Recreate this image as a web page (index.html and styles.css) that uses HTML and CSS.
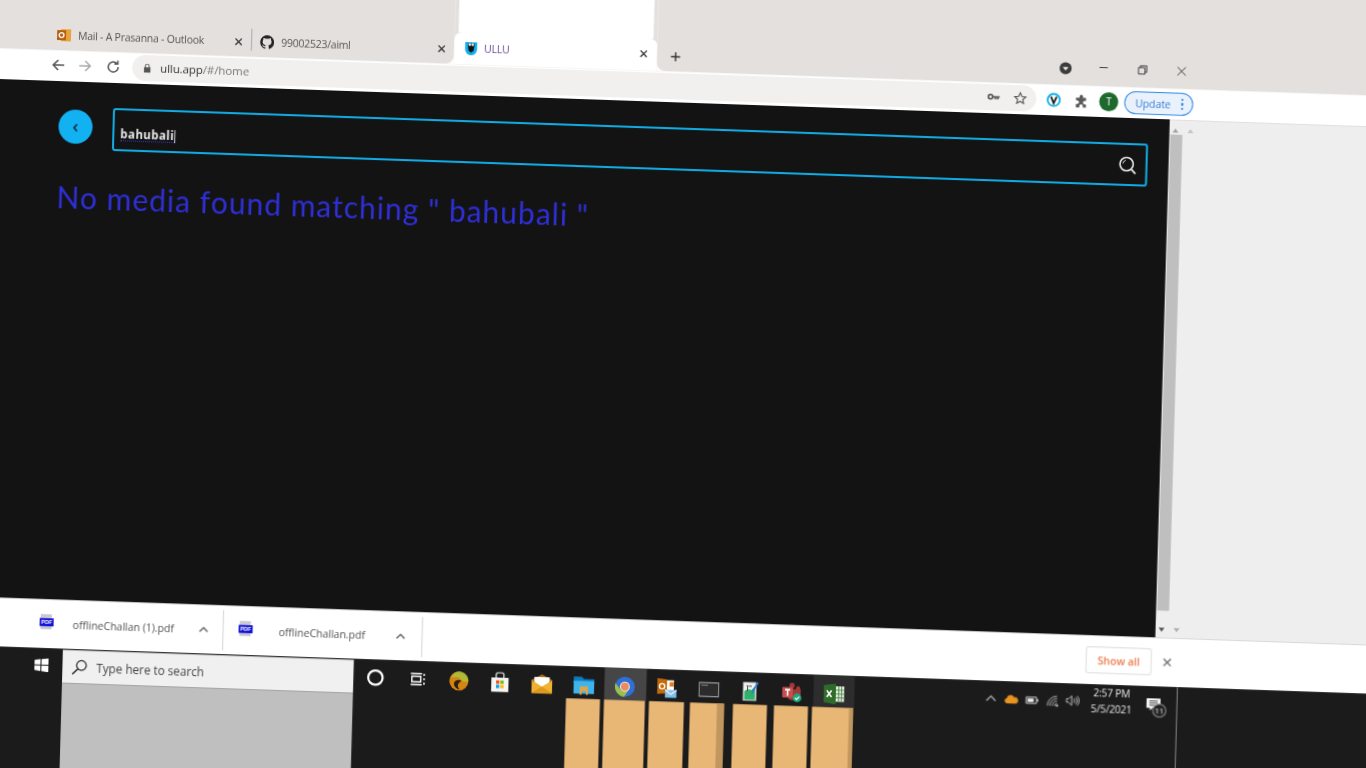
FILE: index.html
```html
<!DOCTYPE html>
<html lang="en">
<head>
<meta charset="utf-8">
<title>ULLU</title>
<link rel="stylesheet" href="styles.css">
</head>
<body>
<div class="stage">
  <header class="strip">
    <div class="strip-left">
      <div class="tab tab-one">
        <svg class="fav" viewBox="0 0 14 14"><rect x="4" y="1" width="10" height="12" fill="#e8a33d"/><rect y="2" width="9" height="10" fill="#b7610f"/><circle cx="4.5" cy="7" r="2.4" fill="none" stroke="#fff" stroke-width="1.3"/></svg>
        <span class="tab-title">Mail - A Prasanna - Outlook</span>
        <svg class="tab-x" viewBox="0 0 10 10"><path d="M1.5 1.5l7 7M8.5 1.5l-7 7"/></svg>
      </div>
      <div class="tab-sep"></div>
      <div class="tab tab-two">
        <svg class="fav" viewBox="0 0 16 16"><path fill="#222" d="M8 0a8 8 0 0 0-2.5 15.6c.4.1.5-.2.5-.4v-1.4c-2.2.5-2.7-1-2.7-1-.4-.9-.9-1.2-.9-1.2-.7-.5.1-.5.1-.5.8.1 1.2.8 1.2.8.7 1.2 1.9.9 2.3.7.1-.5.3-.9.5-1.1-1.8-.2-3.6-.9-3.6-4 0-.9.3-1.6.8-2.1-.1-.2-.4-1 .1-2.1 0 0 .7-.2 2.2.8a7.600 7.600 0 0 1 4 0c1.500-1 2.200-.8 2.200-.8.400 1.100.200 1.900.100 2.100.5.600.8 1.300.8 2.100 0 3.100-1.900 3.800-3.700 4 .3.300.6.800.6 1.500v2.200c0 .2.100.5.600.4A8 8 0 0 0 8 0z"/></svg>
        <span class="tab-title">99002523/aiml</span>
        <svg class="tab-x" viewBox="0 0 10 10"><path d="M1.500 1.500l7 7M8.500 1.500l-7 7"/></svg>
      </div>
    </div>
    <div class="strip-active">
      <div class="cap"></div>
      <div class="tab tab-on">
        <svg class="fav" viewBox="0 0 14 14"><path fill="#12b0ee" d="M1 1h12v7a6 6 0 0 1-12 0z"/><path fill="#111" d="M3.500 2.500h7l-1 7-2.500 2-2.500-2z"/><circle cx="5.500" cy="3.500" r="1.300" fill="#eee"/><circle cx="8.500" cy="3.500" r="1.300" fill="#eee"/></svg>
        <span class="tab-title on">ULLU</span>
        <svg class="tab-x" viewBox="0 0 10 10"><path d="M1.500 1.500l7 7M8.500 1.500l-7 7"/></svg>
      </div>
    </div>
    <div class="strip-right">
      <svg class="plus" viewBox="0 0 12 12"><path d="M6 1v10M1 6h10"/></svg>
      <svg class="win-drop" viewBox="0 0 14 14"><circle cx="7" cy="7" r="6.500" fill="#3c3c3c"/><path d="M3.800 5.500h6.400L7 9.500z" fill="#eee"/></svg>
      <svg class="win-btn first" viewBox="0 0 12 12"><path d="M1.500 6h9"/></svg>
      <svg class="win-btn" viewBox="0 0 12 12"><path d="M1.500 3.500h7v7h-7zM3.500 3.500v-2h7v7h-2"/></svg>
      <svg class="win-btn" viewBox="0 0 12 12"><path d="M1.500 1.500l9 9M10.500 1.500l-9 9"/></svg>
    </div>
  </header>

  <nav class="toolbar">
    <svg class="nav nav-back" viewBox="0 0 16 16"><path d="M14 8H3M8 3L3 8l5 5"/></svg>
    <svg class="nav nav-fwd" viewBox="0 0 16 16"><path d="M2 8h11M8 3l5 5-5 5"/></svg>
    <svg class="nav nav-reload" viewBox="0 0 16 16"><path d="M13 8a5 5 0 1 1-1.500-3.600M12.500 1.500v3.500H9"/></svg>
    <div class="address">
      <svg class="lock" viewBox="0 0 10 12"><path fill="#555" d="M2 5V3.500a3 3 0 0 1 6 0V5h1v6.500H1V5zm1.200 0h3.600V3.500a1.800 1.800 0 0 0-3.600 0z"/></svg>
      <span class="url">ullu.app<span class="url-dim">/#/home</span></span>
      <svg class="key" viewBox="0 0 16 10"><circle cx="4" cy="5" r="2.700" fill="none" stroke="#555" stroke-width="2"/><path d="M6.500 4h9v2h-1.500v2h-2V6h-1v2h-2V6h-2.500z" fill="#555"/></svg>
      <svg class="star" viewBox="0 0 16 16"><path d="M8 1.800l1.900 4.100 4.400.5-3.300 3 .9 4.400L8 11.600l-3.900 2.200.9-4.400-3.300-3 4.400-.5z"/></svg>
    </div>
    <svg class="ext-v" viewBox="0 0 16 16"><circle cx="8" cy="8" r="6.500" fill="#fff" stroke="#12b0ee" stroke-width="2"/><path d="M5 4.500L8 11.500l3-7" fill="none" stroke="#222" stroke-width="2"/></svg>
    <svg class="ext-p" viewBox="0 0 16 16"><path fill="#5a5a5a" d="M6 2.500a2 2 0 0 1 4 0V4h3.500v3.500H12a2 2 0 0 0 0 4h1.500V15H10v-1.500a2 2 0 0 0-4 0V15H2v-4h1.500a2 2 0 0 0 0-4H2V4h4z"/></svg>
    <span class="avatar">T</span>
    <div class="update"><span class="update-label">Update</span><span class="dots"><i></i><i></i><i></i></span></div>
  </nav>

  <div class="middle">
    <main class="viewport">
      <div class="search-row">
        <button class="back"><svg viewBox="0 0 10 12"><path d="M6.500 2.500L3.500 6l3 3.500"/></svg></button>
        <div class="search">
          <span class="query">bahubali</span><span class="caret"></span>
          <svg class="lens" viewBox="0 0 20 20"><circle cx="8.500" cy="8.500" r="7" fill="none" stroke="#e8e8e8" stroke-width="1.700"/><path d="M13.800 14l4.200 4.500" stroke="#e8e8e8" stroke-width="1.900"/><path d="M4.500 8a4 4 0 0 1 3-3.300" fill="none" stroke="#e8e8e8"/></svg>
        </div>
      </div>
      <p class="empty">No media found matching " bahubali "</p>
    </main>
    <aside class="pane">
      <div class="arrows"><i class="up"></i><i class="up faint"></i></div>
      <div class="thumb"></div>
      <div class="arrows"><i class="down"></i><i class="down faint"></i></div>
    </aside>
  </div>

  <section class="downloads">
    <div class="dl dl-one">
      <span class="pdf"><span class="pdf-page"></span><span class="pdf-tag">PDF</span></span>
      <span class="dl-name">offlineChallan (1).pdf</span>
      <svg class="dl-chev" viewBox="0 0 10 6"><path d="M1 5l4-4 4 4"/></svg>
    </div>
    <div class="dl dl-two">
      <span class="pdf"><span class="pdf-page"></span><span class="pdf-tag">PDF</span></span>
      <span class="dl-name">offlineChallan.pdf</span>
      <svg class="dl-chev" viewBox="0 0 10 6"><path d="M1 5l4-4 4 4"/></svg>
    </div>
    <button class="show-all">Show all</button>
    <svg class="dl-close" viewBox="0 0 10 10"><path d="M1 1l8 8M9 1L1 9"/></svg>
  </section>

  <footer class="taskbar">
    <div class="start">
      <svg viewBox="0 0 14 14"><path fill="#fff" d="M0 2l6-.9V6.500H0zM7 1l7-1v6.500H7zM0 7.500h6v5.400L0 12zM7 7.500h7V14l-7-1z"/></svg>
    </div>
    <div class="tsearch">
      <div class="tsearch-box">
        <svg viewBox="0 0 16 16"><circle cx="10" cy="6" r="4.800" fill="none" stroke="#222" stroke-width="1.200"/><path d="M6.500 9.500L1 15" stroke="#222" stroke-width="1.400"/></svg>
        <span>Type here to search</span>
      </div>
      <div class="tsearch-fill"></div>
    </div>
    <div class="apps">
      <div class="app-row">
        <span class="app small"><svg viewBox="0 0 18 18"><circle cx="9" cy="9" r="6.500" fill="none" stroke="#fff" stroke-width="2"/></svg></span>
        <span class="app small"><svg viewBox="0 0 18 18"><path d="M3 4h10M3 14h10M4 6.500h8v5H4zM15 4v2M15 8v2M15 12v2" fill="none" stroke="#fff" stroke-width="1.300"/></svg></span>
        <span class="app"><svg viewBox="0 0 22 22"><circle cx="11" cy="11" r="10" fill="#d68410"/><path fill="#a9c83e" d="M11 1c5 0 10 4 10 10-2 1-5 1-7 0-1-4-6-5-11-3 1-4 4-7 8-7z" opacity=".8"/><path fill="#2a2013" d="M14 11c-3-2-7-1-8 2-.8 3 2 6 6 7-2-2-2.500-4-1.500-6 .8-1.500 2-2.500 3.500-3z"/></svg></span>
        <span class="app"><svg viewBox="0 0 20 22"><path fill="#f5f5f5" d="M1 6h18v15H1z"/><path d="M6 6V3a2 2 0 0 1 2-2h4a2 2 0 0 1 2 2v3" fill="none" stroke="#ddd" stroke-width="1.400"/><rect x="6" y="9" width="3.500" height="3.500" fill="#f25022"/><rect x="10.500" y="9" width="3.500" height="3.500" fill="#7fba00"/><rect x="6" y="13.500" width="3.500" height="3.500" fill="#00a4ef"/><rect x="10.500" y="13.500" width="3.500" height="3.500" fill="#ffb900"/></svg></span>
        <span class="app"><svg viewBox="0 0 22 20"><path fill="#b36a1b" d="M0 6l11-6 11 6v1H0z"/><path fill="#fff" d="M3 3h16v6l-8 5-8-5z"/><path fill="#f0b232" d="M0 6l11 7 11-7v14H0z"/><path fill="#dd9a1c" d="M0 20l11-7 11 7z"/></svg></span>
        <span class="app"><svg viewBox="0 0 20 18"><path fill="#0f7cc2" d="M0 1h8l2 2h10v4H0z"/><path fill="#3db4ec" d="M0 5h20v12H0z"/><path fill="#dca552" d="M6 10h8v8h-2v-3H8v3H6z"/></svg></span>
        <span class="app app-on"><svg viewBox="0 0 20 20"><circle cx="10" cy="10" r="9.500" fill="#2f6fd6"/><path fill="#4aa23a" d="M1 7l5 9 3.500 3.500A9.500 9.500 0 0 1 1 7z"/><path fill="#9cc04a" d="M1 7a9.500 9.500 0 0 0 8.500 12.500L13 14H7z"/><circle cx="10" cy="10" r="4.800" fill="#e7e7e7"/><circle cx="10" cy="10" r="3.700" fill="#ef8a5a"/></svg></span>
        <span class="app"><svg viewBox="0 0 24 24"><path fill="#fff" d="M8 3h12v12H8z"/><path fill="#e07b1f" d="M15 5h5v5h-5z"/><path fill="#c46a0b" d="M1 1l11 1v16L1 19z"/><circle cx="6.500" cy="10" r="3" fill="none" stroke="#fff" stroke-width="1.600"/><path fill="#7fc0ec" d="M10 14h13v9H10z"/><path d="M10 14l6.500 5 6.500-5" fill="none" stroke="#fff" stroke-width="1.300"/></svg></span>
        <span class="app"><svg viewBox="0 0 22 16"><rect x=".7" y=".7" width="20.600" height="14.600" fill="#2c2c2c" stroke="#999" stroke-width="1.300"/><path d="M3 3.500h7" stroke="#888"/></svg></span>
        <span class="app"><svg viewBox="0 0 20 24"><path fill="#f2f2f2" stroke="#888" d="M1 2h15v21H1z"/><path fill="#2fb36a" d="M2.500 12l5-2 3 1 4-4v15h-12z"/><path d="M5 6h1v6M7 6.500h4" stroke="#333" fill="none"/><path d="M11 14l7-12" stroke="#2e7bd6" stroke-width="2"/></svg></span>
        <span class="app"><svg viewBox="0 0 24 24"><circle cx="12" cy="4" r="3" fill="#a33a3a"/><circle cx="19" cy="7" r="2.300" fill="#a33a3a"/><path fill="#a33a3a" d="M7 8h15v8a5 5 0 0 1-5 5h-5a5 5 0 0 1-5-5z"/><rect x="1" y="6" width="12" height="12" rx="1" fill="#c94f4f"/><path d="M4 9h6M7 9v7" stroke="#fff" stroke-width="1.800"/><circle cx="18" cy="18" r="5" fill="#1fa67a"/><path d="M15.500 18l2 2 3-3.500" stroke="#fff" fill="none" stroke-width="1.300"/></svg></span>
        <span class="app app-soft"><svg viewBox="0 0 22 22"><path fill="#2f6b2a" d="M0 2l13-2v22L0 20z"/><path fill="#e6f0e2" d="M13 3h9v16h-9z"/><path d="M16 3v16M19 3v16M13 7h9M13 11h9M13 15h9" stroke="#4f8b49"/><path d="M3.500 7.500l5 7M8.500 7.500l-5 7" stroke="#fff" stroke-width="1.700"/></svg></span>
      </div>
      <div class="blocks">
        <div class="block b1"></div>
        <div class="block b2"></div>
        <div class="block b3"></div>
        <div class="block b4"></div>
        <div class="block b5"></div>
        <div class="block b6"></div>
        <div class="block b7"></div>
      </div>
    </div>
    <div class="tray">
      <svg class="t-chev" viewBox="0 0 12 7"><path d="M1 6l5-5 5 5"/></svg>
      <svg class="t-cloud" viewBox="0 0 16 10"><path fill="#e8941f" d="M3 10a3 3 0 0 1-.5-5.900A4.500 4.500 0 0 1 11 3a3.500 3.500 0 0 1 2 7z"/></svg>
      <svg class="t-bat" viewBox="0 0 14 9"><rect x=".5" y="1" width="11.500" height="7" fill="none" stroke="#eee"/><rect x="2" y="2.500" width="7" height="4" fill="#eee"/><rect x="12.500" y="3" width="1.500" height="3" fill="#eee"/></svg>
      <svg class="t-wifi" viewBox="0 0 16 14"><path d="M1 13a12 12 0 0 1 12-12M4 13a9 9 0 0 1 9-9M7 13a6 6 0 0 1 6-6M10 13a3 3 0 0 1 3-3" fill="none" stroke="#ddd"/><circle cx="13" cy="12.500" r="1.300" fill="#fff"/></svg>
      <svg class="t-vol" viewBox="0 0 16 14"><path d="M1 5h2.500L7 1.500v11L3.500 9H1zM9.500 4.500a4 4 0 0 1 0 5M11.500 3a6 6 0 0 1 0 8M13.500 1.500a8 8 0 0 1 0 11" fill="none" stroke="#ddd"/></svg>
      <div class="clock"><span>2:57 PM</span><span>5/5/2021</span></div>
      <div class="notif">
        <svg viewBox="0 0 16 15"><path fill="#fff" d="M0 0h16v11H7l-3 3v-3H0z"/><path d="M3 3h10M3 5.500h10M3 8h7" stroke="#222"/></svg>
        <span class="badge">11</span>
      </div>
      <div class="tray-end"></div>
    </div>
  </footer>
</div>
</body>
</html>
```
FILE: styles.css
```css
html, body {
  margin: 0;
  width: 1366px;
  height: 768px;
  overflow: hidden;
  background: #1b1b1b;
}
body { font-family: "Open Sans", "Noto Sans", sans-serif; color: #444; }
svg { display: block; flex: none; }
i { display: block; }
button { font: inherit; padding: 0; border: 0; cursor: pointer; }

.stage {
  width: 1520px;
  height: 900px;
  display: flex;
  flex-direction: column;
  transform-origin: 0 0;
  transform: matrix(1, .0345, -.028, 1, 1.7, -60);
  filter: blur(.3px);
}

/* tab strip */
.strip { height: 108px; display: flex; background: #fff; flex: none; }
.strip-left {
  width: 455px;
  background: #e4e0dd;
  border-bottom-right-radius: 8px;
  display: flex;
  align-items: flex-end;
  padding-left: 58px;
  box-sizing: border-box;
  padding-bottom: 6px;
}
.strip-active { width: 203px; display: flex; flex-direction: column; background: #e4e0dd; }
.cap { flex: 1; margin: 0 4px; background: #fff; }
.strip-right {
  flex: 1;
  background: #e4e0dd;
  border-bottom-left-radius: 8px;
  display: flex;
  align-items: flex-end;
  padding-bottom: 9px;
}
.tab { display: flex; align-items: center; height: 18px; }
.tab-one { width: 186px; }
.tab-sep { width: 1px; height: 22px; background: #aaa; margin: 0 8px; flex: none; }
.tab-two { width: 186px; }
.tab-on {
  height: 32px;
  background: #fff;
  border-radius: 8px 8px 0 0;
  padding: 0 9px 0 10px;
  box-sizing: content-box;
  align-items: flex-start;
}
.fav { width: 14px; height: 14px; margin-right: 7px; }
.tab-on .fav { margin-top: 9px; margin-right: 6px; }
.tab-title { font-size: 10.5px; letter-spacing: -.25px; color: #5a5654; flex: 1; white-space: nowrap; }
.tab-title.on { color: #6a4a94; margin-top: 9px; }
.tab-x { width: 9px; height: 9px; fill: none; stroke: #333; stroke-width: 1.500; }
.tab-on .tab-x { margin-top: 11px; }

.plus { width: 11px; height: 11px; margin-left: 13px; fill: none; stroke: #333; stroke-width: 1.500; }
.win-drop { width: 13px; height: 13px; margin-left: 378px; margin-bottom: 1px; }
.win-btn { width: 11px; height: 11px; margin-left: 28px; fill: none; stroke: #333; stroke-width: 1; margin-bottom: 3px; }
.win-btn.first { margin-left: 26px; margin-bottom: 4px; }

/* toolbar */
.toolbar { height: 31px; flex: none; background: #fff; display: flex; align-items: center; }
.nav { width: 16px; height: 16px; fill: none; stroke-width: 1.500; margin-bottom: 2px; }
.nav-back { margin-left: 52px; stroke: #555; }
.nav-fwd { margin-left: 11px; stroke: #aaa; }
.nav-reload { margin-left: 12px; stroke: #555; }
.address {
  width: 904px;
  height: 26px;
  margin-left: 11px;
  margin-bottom: 2px;
  box-sizing: border-box;
  border-radius: 13px;
  background: #f1f0ee;
  display: flex;
  align-items: center;
  padding-left: 11px;
}
.lock { width: 8px; height: 10px; }
.url { font-size: 11.500px; color: #333; margin-left: 9px; flex: 1; letter-spacing: -.1px; }
.url-dim { color: #777; }
.key { width: 13px; height: 9px; margin-right: 13px; }
.star { width: 14px; height: 14px; margin-right: 9px; fill: none; stroke: #555; stroke-width: 1.300; }
.ext-v { width: 15px; height: 15px; margin-left: 10px; }
.ext-p { width: 14px; height: 14px; margin-left: 13px; }
.avatar {
  width: 19px;
  height: 19px;
  margin-left: 11px;
  border-radius: 50%;
  background: #1e6a2e;
  color: #fff;
  font-size: 10px;
  line-height: 19px;
  text-align: center;
  flex: none;
}
.update {
  width: 69px;
  height: 23px;
  margin-left: 6px;
  box-sizing: border-box;
  border: 1px solid #3a8ee6;
  border-radius: 12px;
  background: #e9f2fc;
  display: flex;
  align-items: center;
  padding-left: 10px;
}
.update-label { font-size: 10.500px; color: #3a7fd8; flex: 1; letter-spacing: -.1px; }
.dots { display: flex; flex-direction: column; gap: 2px; margin-right: 9px; }
.dots i { width: 2.500px; height: 2.500px; border-radius: 50%; background: #1a73e8; }

/* page */
.middle { height: 518px; flex: none; display: flex; }
.viewport { width: 1172px; flex: none; background: #131313; padding: 25px 21px 0 62px; box-sizing: border-box; }
.search-row { display: flex; align-items: flex-start; gap: 20px; }
.back {
  width: 34px;
  height: 34px;
  margin-top: 3px;
  border-radius: 50%;
  background: #12b1f2;
  display: flex;
  align-items: center;
  justify-content: center;
  flex: none;
}
.back svg { width: 10px; height: 12px; margin-top: 2px; fill: none; stroke: #123; stroke-width: 1.500; }
.search {
  flex: 1;
  height: 43px;
  box-sizing: border-box;
  border: 2px solid #12aee8;
  border-radius: 3px;
  display: flex;
  align-items: center;
  padding: 0 8px 0 6px;
}
.query {
  font-family: "Noto Sans", sans-serif;
  font-size: 11.500px;
  font-weight: 700;
  letter-spacing: .45px;
  color: #e8e8e8;
  border-bottom: 1px dotted #3a3ad0;
  line-height: 12px;
  margin-top: 10px;
}
.caret { width: 1px; height: 13px; background: #ccc; margin: 10px auto 0 0; }
.lens { width: 19px; height: 19px; margin-top: 1px; }
.empty {
  margin: 28px 0 0;
  font-family: "Lato", sans-serif;
  font-size: 30px;
  line-height: 38px;
  letter-spacing: 1px;
  color: #2f2fd8;
  white-space: nowrap;
}

.pane { flex: 1; background: #eee; display: flex; flex-direction: column; padding: 6px 0 0 0; }
.arrows { display: flex; gap: 9px; padding-left: 3px; height: 9px; align-items: center; }
.up, .down { width: 0; height: 0; border-left: 3px solid transparent; border-right: 3px solid transparent; }
.up { border-bottom: 4px solid #a3a3a3; }
.up.faint { border-bottom-color: #c4c4c4; }
.down { border-top: 4px solid #555; }
.down.faint { border-top-color: #b0b0b0; }
.thumb { width: 12px; height: 476px; background: #bfbfbf; margin: 0 0 14px 1px; }

/* downloads */
.downloads { height: 49px; flex: none; background: #fff; display: flex; align-items: center; }
.dl { display: flex; align-items: center; height: 40px; box-sizing: border-box; border-right: 1px solid #d4d4d4; flex: none; }
.dl-one { width: 241px; padding-left: 57px; }
.dl-two { width: 199px; padding-left: 15px; }
.pdf { width: 14px; height: 16px; display: block; position: relative; margin-bottom: 4px; flex: none; }
.pdf-page { display: block; width: 11px; height: 15px; margin-left: 1px; background: #c8c8d0; }
.pdf-tag {
  position: absolute;
  left: 0;
  top: 4px;
  width: 14px;
  height: 8px;
  background: #1010d8;
  color: #fff;
  font: 700 5.500px/8px "Liberation Sans", sans-serif;
  text-align: center;
}
.dl-name { font-size: 10.600px; color: #555; letter-spacing: -.05px; flex: 1; white-space: nowrap; }
.dl-one .dl-name { margin-left: 19px; }
.dl-two .dl-name { margin-left: 26px; }
.dl-chev { width: 10px; height: 6px; fill: none; stroke: #666; stroke-width: 1.500; margin-right: 14px; }
.dl-two .dl-chev { margin-right: 16px; }
.show-all {
  width: 66px;
  height: 27px;
  margin-left: 663px;
  background: #fff;
  border: 1px solid #ddd;
  border-radius: 3px;
  color: #ee7a4a;
  font-size: 10.500px;
  font-weight: 600;
}
.dl-close { width: 9px; height: 9px; margin-left: 11px; fill: none; stroke: #666; stroke-width: 1.500; }

/* taskbar */
.taskbar { flex: 1; display: flex; background: #1b1b1b; }
.start { width: 81px; flex: none; padding: 10px 0 0 53px; box-sizing: border-box; }
.start svg { width: 14px; height: 14px; }
.tsearch { width: 291px; flex: none; display: flex; flex-direction: column; margin-top: 1px; }
.tsearch-box {
  height: 33px;
  background: #f0f0f0;
  display: flex;
  align-items: center;
  padding-left: 9px;
  font-size: 11.700px;
  color: #444;
}
.tsearch-box svg { width: 16px; height: 16px; margin-right: 9px; }
.tsearch-fill { flex: 1; background: #bfbfbf; }
.apps { width: 502px; flex: none; display: flex; flex-direction: column; padding-left: 1px; box-sizing: border-box; }
.app-row { display: flex; height: 32px; }
.app { width: 41.700px; height: 32px; display: flex; align-items: center; justify-content: center; flex: none; padding-top: 4px; box-sizing: border-box; }
.app svg { width: 21px; height: 21px; }
.app.small svg { width: 20px; height: 20px; }
.app-on { background: #464646; }
.app-soft { background: #2d2d2d; }
.blocks { display: flex; flex: 1; }
.block { background: #e9b775; flex: none; box-sizing: content-box; }
.b1 { width: 34px; margin-left: 212px; }
.b2 { width: 41px; margin-left: 4px; }
.b3 { width: 35px; margin-left: 4px; }
.b4 { width: 27px; margin-left: 6px; border-right: 7px solid #c1975f; }
.b5 { width: 34px; margin-left: 9px; }
.b6 { width: 34px; margin-left: 7px; }
.b7 { width: 37px; margin-left: 4px; border-right: 4px solid #c1975f; }
.tray { flex: 1; display: flex; align-items: flex-start; padding: 11px 0 0 130px; position: relative; color: #eee; }
.t-chev { width: 11px; height: 7px; margin-top: 3px; fill: none; stroke: #ddd; stroke-width: 1.200; }
.t-cloud { width: 14px; height: 9px; margin: 2px 0 0 8px; }
.t-bat { width: 13px; height: 8px; margin: 3px 0 0 7px; }
.t-wifi { width: 13px; height: 12px; margin: 1px 0 0 8px; }
.t-vol { width: 14px; height: 12px; margin: 0 0 0 6px; }
.clock {
  width: 62px;
  margin: -11px 0 0 1px;
  display: flex;
  flex-direction: column;
  align-items: center;
  font-size: 10px;
  line-height: 16px;
  letter-spacing: -.1px;
}
.notif { position: relative; margin: 1px 0 0 4px; }
.notif svg { width: 14px; height: 13px; }
.badge {
  position: absolute;
  left: 6px;
  top: 5px;
  width: 12px;
  height: 12px;
  border-radius: 50%;
  border: 1px solid #999;
  background: #222;
  font-size: 8px;
  line-height: 12px;
  text-align: center;
}
.tray-end { position: absolute; left: 321px; top: 0; bottom: 0; width: 1px; background: #8a8a8a; }
```
